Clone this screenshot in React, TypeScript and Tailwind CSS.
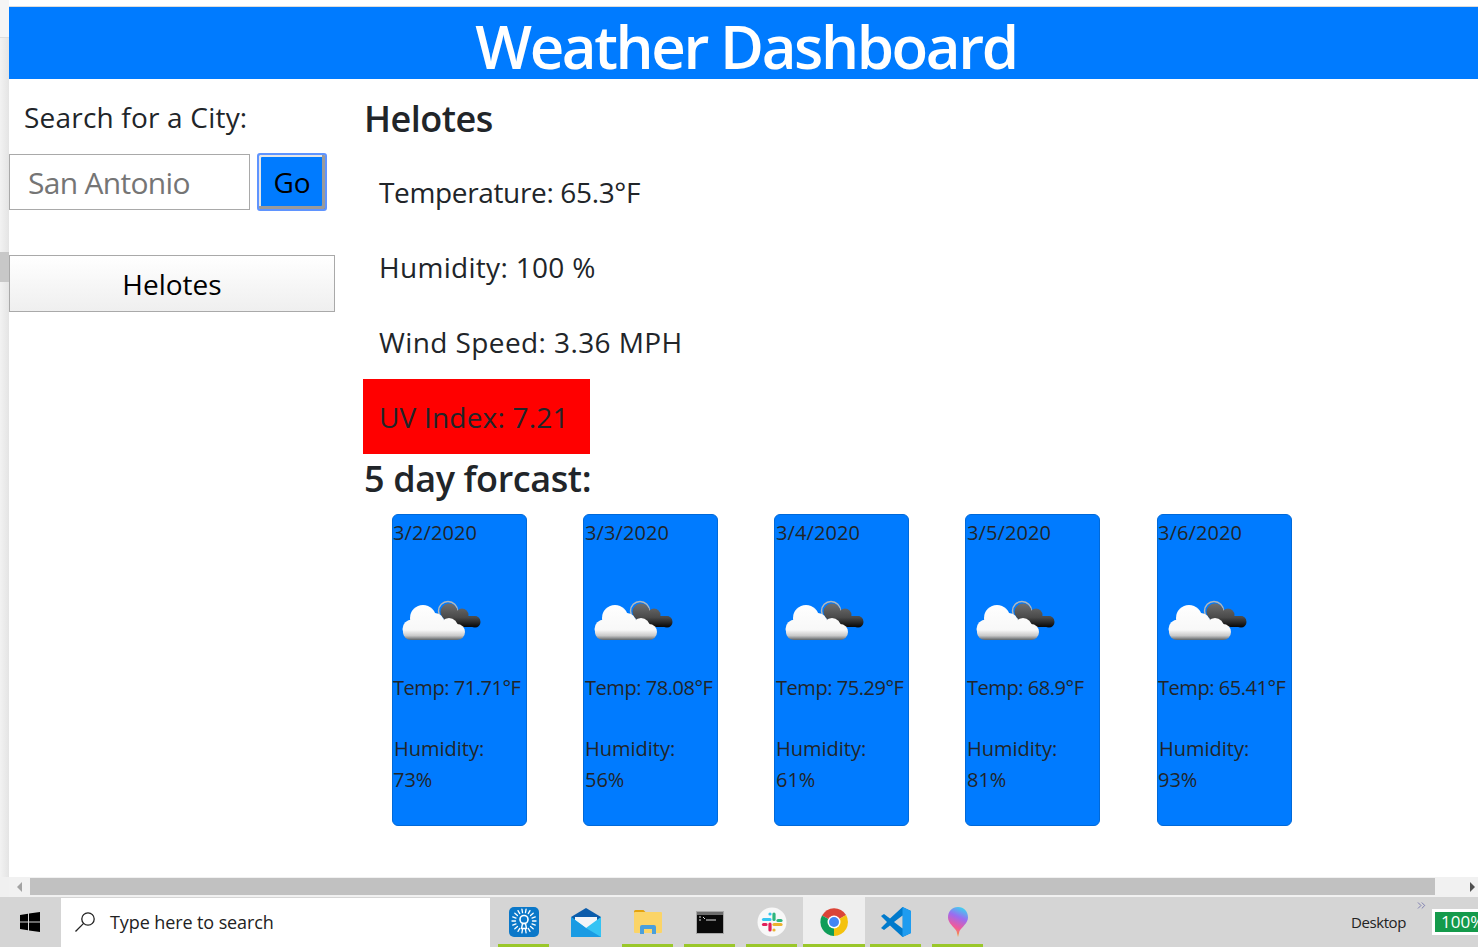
import React from 'react';
import { ChevronsRight } from 'lucide-react';

const fontStack = "font-['Open_Sans','Noto_Sans',sans-serif]";

const forecast = [
  { date: '3/2/2020', temp: '71.71', humidity: '73%' },
  { date: '3/3/2020', temp: '78.08', humidity: '56%' },
  { date: '3/4/2020', temp: '75.29', humidity: '61%' },
  { date: '3/5/2020', temp: '68.9', humidity: '81%' },
  { date: '3/6/2020', temp: '65.41', humidity: '93%' },
];

const CloudIcon: React.FC<{ id: number }> = ({ id }) => (
  <svg width="80" height="42" viewBox="0 0 80 42" className="block">
    <defs>
      <linearGradient id={`white-${id}`} gradientUnits="userSpaceOnUse" x1="0" y1="4" x2="0" y2="40">
        <stop offset="0" stopColor="#ffffff" />
        <stop offset="0.72" stopColor="#f8f8f8" />
        <stop offset="0.88" stopColor="#c9c9c9" />
        <stop offset="1" stopColor="#5f6468" />
      </linearGradient>
      <linearGradient id={`dark-${id}`} gradientUnits="userSpaceOnUse" x1="0" y1="3" x2="0" y2="27">
        <stop offset="0" stopColor="#707070" />
        <stop offset="0.6" stopColor="#4a4a4a" />
        <stop offset="1" stopColor="#080808" />
      </linearGradient>
    </defs>
    <circle cx="46" cy="11" r="9.500" fill="none" stroke="#b4b8bb" strokeWidth="1.500" />
    <g fill={`url(#dark-${id})`}>
      <circle cx="47" cy="12" r="8.500" />
      <circle cx="60" cy="15" r="6.500" />
      <circle cx="73" cy="22" r="5.500" />
      <rect x="42" y="16" width="36" height="11" rx="5" />
    </g>
    <g fill={`url(#white-${id})`}>
      <circle cx="21" cy="18" r="13" />
      <circle cx="33" cy="22" r="9" />
      <circle cx="10" cy="29" r="9.500" />
      <circle cx="47" cy="27" r="9" />
      <rect x="1" y="24" width="62" height="16" rx="8" />
    </g>
  </svg>
);

const ForecastCard: React.FC<{ day: (typeof forecast)[number]; index: number }> = ({ day, index }) => {
  const shifted = index >= 1 && index <= 3;
  return (
    <div className={`h-[312px] w-[135px] shrink-0 rounded-[6px] border border-[#0069d9] bg-[#007bff] text-[20px] leading-[31px] text-[#212529] ${index === 4 ? 'ml-px' : ''} ${shifted ? 'pl-px' : ''}`}>
      <p className="pt-[2px] tracking-[0.1px]">{day.date}</p>
      <div className={`mt-[52px] h-[42px] ${index === 4 ? 'ml-[10px]' : 'ml-[9px]'}`}>
        <CloudIcon id={index} />
      </div>
      <p className="mt-[30px] whitespace-nowrap tracking-[-0.45px]">Temp: {day.temp}°F</p>
      <p className={`mt-[30px] ${shifted ? '' : 'pl-px'}`}>Humidity:</p>
      <p>{day.humidity}</p>
    </div>
  );
};

const TaskbarSlot: React.FC<{ active?: boolean; running?: boolean; children: React.ReactNode }> = ({ active, running, children }) => (
  <div className={`relative flex h-[50px] w-[62px] items-center justify-center ${active ? 'bg-[#eeeeee]' : ''}`}>
    {children}
    {running && <span className={`absolute bottom-0 h-[3px] bg-[#9ac72a] ${active ? 'left-0 right-0' : 'left-[5px] right-[6px]'}`} />}
  </div>
);

const AppIcons = {
  Identity: () => (
    <svg width="30" height="30" viewBox="0 0 30 30">
      <rect width="30" height="30" rx="5" fill="#0b78c9" />
      <g stroke="#ffffff" strokeWidth="1.300" strokeLinecap="round">
        {Array.from({ length: 18 }).map((_, i) => {
          const a = (i * Math.PI * 2) / 18;
          return <line key={i} x1={15 + Math.cos(a) * 8.5} y1={14 + Math.sin(a) * 8.5} x2={15 + Math.cos(a) * 12} y2={14 + Math.sin(a) * 12} />;
        })}
      </g>
      <circle cx="15" cy="12.500" r="4" fill="none" stroke="#ffffff" strokeWidth="1.600" />
      <path d="M13.500 16.500h3l1 5h-5z" fill="none" stroke="#ffffff" strokeWidth="1.400" />
    </svg>
  ),
  Mail: () => (
    <svg width="30" height="29" viewBox="0 0 30 29">
      <path d="M0 9L15 0l15 9v6H0z" fill="#0b5cab" />
      <path d="M4 9h22v6l-11 6-11-6z" fill="#f2f5f8" />
      <path d="M0 9l15 11 15-11v20H0z" fill="#34c3f4" />
      <path d="M0 29V9l15 11 15 9z" fill="#1a9be3" />
    </svg>
  ),
  Folder: () => (
    <svg width="28" height="24" viewBox="0 0 28 24">
      <path d="M0 1.500A1.500 1.500 0 0 1 1.500 0h8l3 3H0z" fill="#e3a30f" />
      <rect y="2" width="28" height="21" rx="1" fill="#fbd467" />
      <path d="M6 24v-7a2 2 0 0 1 2-2h12a2 2 0 0 1 2 2v7h-4v-5h-8v5z" fill="#4a9fdc" />
    </svg>
  ),
  Terminal: () => (
    <svg width="28" height="23" viewBox="0 0 28 23">
      <rect width="28" height="23" fill="#a9a9a9" />
      <rect x="1" y="4" width="26" height="18" fill="#0a0a0a" />
      <rect x="1" y="1" width="26" height="3" fill="#6d6d6d" />
      <path d="M3 6h2M3 9h2M7 6l2 2M10 9h10" stroke="#e0e0e0" strokeWidth="1" />
    </svg>
  ),
  Slack: () => (
    <svg width="30" height="30" viewBox="0 0 30 30">
      <circle cx="15" cy="15" r="14.500" fill="#f8f8f8" />
      <g strokeWidth="3.200" strokeLinecap="round">
        <path d="M17 7v5.500" stroke="#2eb67d" />
        <path d="M21 13.500h3" stroke="#2eb67d" />
        <path d="M6.500 12.500H13" stroke="#36c5f0" />
        <path d="M13 7h0" stroke="#36c5f0" />
        <path d="M17 17.500h7" stroke="#ecb22e" />
        <path d="M17 23h0" stroke="#ecb22e" />
        <path d="M13 17v6" stroke="#e01e5a" />
        <path d="M6.500 17.500H9" stroke="#e01e5a" />
      </g>
    </svg>
  ),
  Chrome: () => (
    <svg width="28" height="28" viewBox="0 0 28 28">
      <path d="M14 14L2 7.500A14 14 0 0 1 26.100 7z" fill="#db4437" />
      <path d="M14 14L26.100 7A14 14 0 0 1 14 28z" fill="#f4c20d" />
      <path d="M14 14v14A14 14 0 0 1 2 7.500z" fill="#0f9d58" />
      <circle cx="14" cy="14" r="6.500" fill="#ffffff" />
      <circle cx="14" cy="14" r="5" fill="#4285f4" />
    </svg>
  ),
  Code: () => (
    <svg width="30" height="30" viewBox="0 0 30 30">
      <path d="M21.500 0L30 4v22l-8.500 4L9 18.500 3 23 0 21l6-6-6-6 3-2 6 4.500z" fill="#007acc" />
      <path d="M21.500 0L30 4v22l-8.500 4z" fill="#1f9cf0" />
      <path d="M21.500 8.500L13 15l8.500 6.500z" fill="#d4d4d4" />
    </svg>
  ),
  Paint: () => (
    <svg width="22" height="30" viewBox="0 0 22 30">
      <defs>
        <linearGradient id="paint" x1="0.700" y1="0" x2="0.400" y2="1">
          <stop offset="0" stopColor="#38d6f0" />
          <stop offset="0.35" stopColor="#9b6cf0" />
          <stop offset="0.7" stopColor="#f05a9b" />
          <stop offset="1" stopColor="#f5a623" />
        </linearGradient>
      </defs>
      <path d="M11 0C17 0 21 4.500 21 10.500C21 16 15 20 12.500 24L11 30L9.500 24C7 20 1 16 1 10.500C1 4.500 5 0 11 0z" fill="url(#paint)" />
    </svg>
  ),
};

const App: React.FC = () => {
  return (
    <div className={`flex h-[947px] w-[1478px] flex-col overflow-hidden bg-white text-[#212529] ${fontStack}`}>
      <div className="flex min-h-0 flex-1">
        {/* sliver of the window behind */}
        <div className="flex w-[9px] shrink-0 flex-col bg-gradient-to-r from-[#f2f2f2] to-[#e4e4e4]">
          <div className="h-[38px] border-b border-[#dddddd] bg-[#f5f5f5]" />
          <div className="mt-[214px] h-[30px] bg-[#c8c8c8]" />
        </div>
        <div className="flex min-w-0 flex-1 flex-col">
          <div className="h-[7px] shrink-0 border-b border-[#dcdcdc] bg-white" />
          <h1 className="flex h-[72px] shrink-0 items-center justify-center bg-[#007bff] pl-[5px] pt-[5px] text-[60px] font-semibold tracking-[-2.4px] text-white">
            Weather Dashboard
          </h1>
          <div className="flex min-h-0 flex-1">
            <aside className="w-[354px] shrink-0">
              <label className="ml-[15px] mt-[17px] block text-[28px] leading-[42px] tracking-[0.2px]">Search for a City:</label>
              <div className="mt-[16px] flex items-start gap-[7px]">
                <input
                  readOnly
                  placeholder="San Antonio"
                  className="h-[56px] w-[241px] border border-[#a9a9a9] px-[18px] text-[30px] tracking-[-0.7px] placeholder:text-[#757575]"
                />
                <button className="-mt-px h-[58px] w-[70px] rounded-[3px] border-2 border-[#5f94ff] bg-[#007bff] text-[28px] text-black shadow-[inset_-3px_-3px_0_#9a9a9a,inset_2px_2px_0_#e6e6e6]">
                  Go
                </button>
              </div>
              <button className="mt-[44px] h-[57px] w-[326px] border border-[#a9a9a9] bg-gradient-to-b from-white to-[#efefef] text-[28px] text-black">
                Helotes
              </button>
            </aside>
            <main className="min-w-0 flex-1">
              <h2 className="ml-px mt-[17px] text-[36px] font-semibold leading-[46px] tracking-[-0.5px]">Helotes</h2>
              <div className="mt-[13px] text-[28px] leading-[45px]">
                <p className="px-[16px] py-[15px] tracking-[-0.35px]">Temperature: 65.3°F</p>
                <p className="px-[16px] py-[15px] tracking-[0.3px]">Humidity: 100 %</p>
                <p className="px-[16px] py-[15px] tracking-[0.4px]">Wind Speed: 3.36 MPH</p>
                <p className="-mt-px w-[227px] bg-[#ff0000] pb-[14px] pl-[16px] pt-[16px] tracking-[0.2px]">UV Index: 7.21</p>
              </div>
              <h2 className="ml-px mt-[2px] text-[36px] font-semibold leading-[46px] tracking-[-0.4px]">5 day forcast:</h2>
              <div className="ml-[29px] mt-[12px] flex gap-[56px]">
                {forecast.map((day, i) => (
                  <ForecastCard key={day.date} day={day} index={i} />
                ))}
              </div>
            </main>
          </div>
        </div>
      </div>

      {/* horizontal scrollbar */}
      <div className="flex h-[20px] shrink-0 items-stretch">
        <div className="w-[9px] bg-[#f0f0f0]" />
        <div className="flex flex-1 items-center bg-[#f1f1f1] pb-[2px] pt-px">
          <div className="flex h-full w-[21px] items-center justify-center">
            <span className="h-0 w-0 border-y-[5px] border-r-[5px] border-y-transparent border-r-[#a3a3a3]" />
          </div>
          <div className="h-full w-[1405px] bg-[#c1c1c1]" />
          <div className="flex h-full flex-1 items-center justify-end pr-[3px]">
            <span className="h-0 w-0 border-y-[5px] border-l-[5px] border-y-transparent border-l-[#505050]" />
          </div>
        </div>
      </div>

      {/* windows taskbar */}
      <div className="flex h-[50px] shrink-0 items-center bg-[#d5d5d5] text-[#222]">
        <div className="flex w-[61px] justify-center pr-[2px]">
          <svg width="20" height="20" viewBox="0 0 20 20" fill="#000000">
            <path d="M0 3l8-1.200V9.500H0zM9 1.600L20 0v9.500H9zM0 10.500h8v7.700L0 17zM9 10.500h11V20L9 18.400z" />
          </svg>
        </div>
        <div className="flex h-[49px] w-[429px] items-center bg-white pl-[14px]">
          <svg width="20" height="20" viewBox="0 0 20 20" fill="none" stroke="#222222" strokeWidth="1.300">
            <circle cx="13" cy="7" r="6.200" />
            <path d="M8.600 11.400L0.500 19.500" />
          </svg>
          <span className="ml-[15px] text-[18px] tracking-[-0.1px]">Type here to search</span>
        </div>
        <div className="ml-[3px] flex">
          <TaskbarSlot running><AppIcons.Identity /></TaskbarSlot>
          <TaskbarSlot><AppIcons.Mail /></TaskbarSlot>
          <TaskbarSlot running><AppIcons.Folder /></TaskbarSlot>
          <TaskbarSlot running><AppIcons.Terminal /></TaskbarSlot>
          <TaskbarSlot running><AppIcons.Slack /></TaskbarSlot>
          <TaskbarSlot active running><AppIcons.Chrome /></TaskbarSlot>
          <TaskbarSlot running>
            <AppIcons.Code />
            <span className="absolute bottom-0 right-[6px] h-[3px] w-[11px] bg-[#bcd97a]" />
          </TaskbarSlot>
          <TaskbarSlot running><AppIcons.Paint /></TaskbarSlot>
        </div>
        <div className="relative flex h-full flex-1 items-center justify-end">
          <ChevronsRight size={13} strokeWidth={1.500} className="absolute right-[50px] top-[2px] text-[#6b6ba8]" />
          <span className="mr-[26px] text-[15px] tracking-[-0.4px]">Desktop</span>
          <div className="w-[46px] overflow-hidden whitespace-nowrap border-[3px] border-r-0 border-white bg-[#149a4b] pl-[6px] text-[17px] leading-[20px] text-white">
            100%
          </div>
        </div>
      </div>
    </div>
  );
};

export default App;
